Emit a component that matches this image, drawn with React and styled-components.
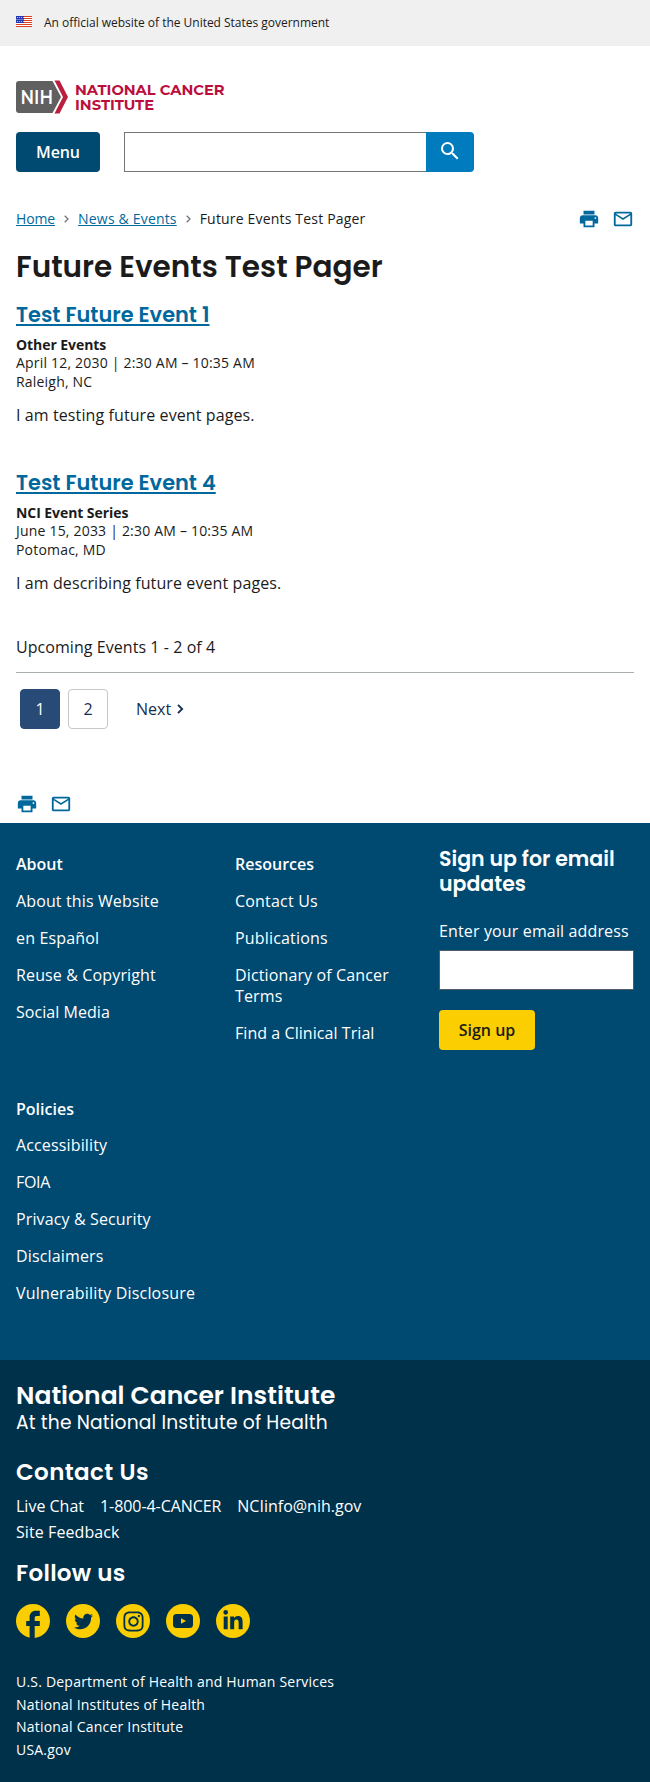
import React from "react";
import styled, { createGlobalStyle } from "styled-components";
import { MdPrint, MdMailOutline, MdSearch } from "react-icons/md";
import { FaTwitter, FaInstagram, FaLinkedinIn } from "react-icons/fa";

const Global = createGlobalStyle`
  * { box-sizing: border-box; }
  body { margin: 0; background: #fff; color: #1b1b1b; font-family: "Open Sans", sans-serif; font-size: 16px; line-height: 21px; }
  a { color: inherit; text-decoration: none; }
  h1, h2, h3, p, ul { margin: 0; padding: 0; }
  ul { list-style: none; }
`;
const display = `font-family: Poppins, Inter, sans-serif; font-weight: 600; white-space: nowrap;`;

const Banner = styled.div`
  height: 46px; padding: 0 16px 1px; background: #f0f0f0; display: flex; align-items: center; gap: 12px;
  font-size: 12px; letter-spacing: -0.02px;
  svg { margin-top: -2px; }
`;
const Header = styled.header`
  padding: 34px 16px 0;
  > svg { display: block; }
`;
const Controls = styled.div` display: flex; margin-top: 18px; gap: 24px; `;
const Button = styled.button`
  height: 40px; width: ${(p) => p.$w}px; padding: 0; border: 0; border-radius: 4px;
  background: ${(p) => p.$bg}; color: ${(p) => p.$fg}; font: 600 16px "Open Sans", sans-serif; letter-spacing: -0.1px;
`;
const Search = styled.div` display: flex; width: 350px; height: 40px; `;
const Input = styled.input`
  height: 40px; width: 100%; min-width: 0; flex: 1; border: 1px solid ${(p) => p.$edge || "#71767a"}; border-radius: 0; background: #fff; display: block;
  ${(p) => p.$open && "border-right: 0;"}
`;
const SearchButton = styled.button`
  width: 48px; height: 40px; border: 0; padding: 0 0 3px; border-radius: 0 4px 4px 0; background: #007bbd; color: #fff;
  display: flex; align-items: center; justify-content: center;
`;
const Main = styled.main` padding: 37px 16px 0; height: 651px; `;
const TopRow = styled.div` display: flex; justify-content: space-between; height: 20px; align-items: center; `;
const Crumbs = styled.nav`
  display: flex; align-items: center; font-size: 14px; line-height: 20px;
  svg { margin: 0 9px; color: #71767a; }
`;
const Crumb = styled.a`
  letter-spacing: ${(p) => p.$ls}px;
  ${(p) => p.href && "color: #00689d; text-decoration: underline;"}
`;
const Tools = styled.div` display: flex; gap: 12px; color: #00689d; margin-top: ${(p) => p.$mt || 0}px; svg { display: block; } `;
const Title = styled.h1`${display} font-size: 29.5px; line-height: 38px; margin: 19px 0 15px; `;
const EventBlock = styled.article` height: 168px; &:last-child { height: 167.5px; } `;
const EventTitle = styled.h2`
  ${display} font-size: 20.9px; line-height: 28px; color: #00689d;
  a { text-decoration: underline; text-decoration-thickness: 2px; text-underline-offset: 2px; }
`;
const Meta = styled.div`
  font-size: 14px; line-height: 18.6px; margin-top: 6.7px; letter-spacing: 0.2px;
  b { letter-spacing: -0.07px; }
`;
const Desc = styled.p` margin-top: 13.9px; letter-spacing: 0.1px; `;
const Count = styled.p` border-bottom: 1px solid #a9aeb1; height: 36px; letter-spacing: 0.06px; `;
const Pager = styled.nav` display: flex; padding: 16px 4px 0; gap: 8px; align-items: center; color: #1b1b1b; `;
const Page = styled.a`
  width: 40px; height: 40px; border-radius: 4px; display: flex; align-items: center; justify-content: center; padding-top: 1px;
  border: 1px solid ${(p) => (p.$on ? "#284a76" : "#c9c9c9")}; background: ${(p) => (p.$on ? "#284a76" : "#fff")};
  color: ${(p) => (p.$on ? "#fff" : "#162e51")};
`;
const Next = styled.a` display: flex; align-items: center; margin-left: 20px; gap: 6px; color: #162e51; padding-top: 1px; `;

const Footer = styled.footer` color: #fff; `;
const Primary = styled.div` height: 537px; background: #004971; display: flex; padding: 0 16px; `;
const Columns = styled.div` display: grid; grid-template-columns: 219px 160px; grid-template-rows: 245px auto; padding-top: 31px; width: 423px; align-content: start; `;
const Column = styled.section`
  h3 { font-size: 16px; line-height: 21px; font-weight: 600; }
  &:nth-child(3) li:first-child { margin-top: 15px; }
`;
const LinkItem = styled.li` margin-top: 16px; letter-spacing: ${(p) => p.$ls}px; `;
const SignUp = styled.section`
  flex: 1; padding-top: 23px;
  h3 { ${display} font-size: 20.5px; line-height: 25px; }
  label { display: block; margin: 25px 0 8px; white-space: nowrap; letter-spacing: 0.14px; }
  button { margin-top: 20px; letter-spacing: 0; }
`;
const Secondary = styled.div` height: 422px; background: #00314b; padding: 20px 16px 0; `;
const Brand = styled.h2`${display} font-size: 25px; line-height: 32px; letter-spacing: 0.03px; `;
const Sub = styled.p`${display} font-weight: 400; font-size: 18.7px; line-height: 24px; margin-top: -1px; letter-spacing: 0.15px; `;
const Heading = styled.h3`${display} font-size: 23px; line-height: 32px; margin-top: ${(p) => p.$mt}px; letter-spacing: ${(p) => p.$ls}px; `;
const Links = styled.div` display: flex; flex-wrap: wrap; column-gap: 16px; width: 380px; line-height: 26px; margin-top: 5px; `;
const ContactLink = styled.a` letter-spacing: ${(p) => p.$ls || 0}px; `;
const Socials = styled.div` display: flex; gap: 16px; margin-top: 15px; `;
const Disc = styled.a`
  width: 34px; height: 34px; border-radius: 50%; background: ${(p) => (p.$bare ? "none" : "#face00")}; color: #00314b;
  display: flex; align-items: center; justify-content: center;
`;
const Agencies = styled.ul` font-size: 14px; line-height: 22.9px; margin-top: 32.6px; letter-spacing: 0.21px; `;

const Flag = () => (
  <svg width="16" height="11" viewBox="0 0 16 11">
    <rect width="16" height="11" fill="#fff" />
    {[0, 2, 4, 6, 8, 10].map((y) => <rect key={y} y={y} width="16" height="1" fill="#db3e1f" />)}
    <rect width="8" height="7" fill="#1e33b1" />
    {[1, 3, 5].map((y) => [1, 3, 5, 7].map((x) => <circle key={x + "-" + y} cx={x - (y === 3 ? 0 : -0.3)} cy={y + 0.5} r="0.5" fill="#fff" />))}
  </svg>
);
const Logo = () => (
  <svg width="210" height="34" viewBox="0 0 210 34" fontFamily="Montserrat, Inter, sans-serif">
    <path d="M3 1H36.5L45 17L36.5 33H3Q0 33 0 30V4Q0 1 3 1Z" fill="#606060" />
    <path d="M38.5 0.5H43.5L52 17L43.5 33.5H38.5L47 17Z" fill="#bb1f3f" />
    <text x="4.5" y="24" fontSize="20" fontWeight="600" fill="#fff" textLength="32.5" lengthAdjust="spacingAndGlyphs">NIH</text>
    <g fill="#bb0e3d" fontSize="14.8" fontWeight="700">
      <text x="59" y="14.5" textLength="149.5" lengthAdjust="spacingAndGlyphs">NATIONAL CANCER</text>
      <text x="59" y="30" textLength="79" lengthAdjust="spacingAndGlyphs">INSTITUTE</text>
    </g>
  </svg>
);
const Chevron = ({ w, h, stroke }) => (
  <svg width={w} height={h} viewBox="0 0 5 8" fill="none" stroke="currentColor" strokeWidth={stroke}>
    <path d="M0.7 0.7L4 4L0.7 7.3" />
  </svg>
);
const FacebookDisc = () => (
  <svg width="34" height="34" viewBox="2 2 20 20">
    <path fill="#face00" d="M22 12c0-5.52-4.48-10-10-10S2 6.48 2 12c0 4.84 3.44 8.87 8 9.8V15H8v-3h2V9.5C10 7.57 11.57 6 13.5 6H16v3h-2c-.55 0-1 .45-1 1v2h3v3h-3v6.95c5.05-.5 9-4.76 9-9.95z" />
  </svg>
);
const YoutubeGlyph = () => (
  <svg width="20" height="14" viewBox="0 0 20 14">
    <rect width="20" height="14" rx="3.5" fill="#00314b" />
    <path d="M8 4.3L13 7L8 9.7Z" fill="#face00" />
  </svg>
);
const PageTools = ({ mt }) => (
  <Tools $mt={mt}><MdPrint size={22} /><MdMailOutline size={22} /></Tools>
);
const Event = ({ title, kind, when, where, text }) => (
  <EventBlock>
    <EventTitle><a href="#">{title}</a></EventTitle>
    <Meta><b>{kind}</b><div>{when}</div><div>{where}</div></Meta>
    <Desc>{text}</Desc>
  </EventBlock>
);
const LinkColumn = ({ title, items }) => (
  <Column>
    <h3>{title}</h3>
    <ul>{items.map(([label, ls = 0.13]) => <LinkItem key={label} $ls={ls}><a href="#">{label}</a></LinkItem>)}</ul>
  </Column>
);

export default function App() {
  return (
    <>
      <Global />
      <Banner><Flag /><span>An official website of the United States government</span></Banner>
      <Header>
        <Logo />
        <Controls>
          <Button $w={84} $bg="#004971" $fg="#fff">Menu</Button>
          <Search><Input $open aria-label="Search" /><SearchButton aria-label="Submit"><MdSearch size={24} /></SearchButton></Search>
        </Controls>
      </Header>
      <Main>
        <TopRow>
          <Crumbs>
            <Crumb href="#" $ls={-0.12}>Home</Crumb>
            <Chevron w={5} h={8} stroke={1.3} />
            <Crumb href="#" $ls={0.18}>News &amp; Events</Crumb>
            <Chevron w={5} h={8} stroke={1.3} />
            <Crumb as="span" $ls={0.18}>Future Events Test Pager</Crumb>
          </Crumbs>
          <PageTools />
        </TopRow>
        <Title>Future Events Test Pager</Title>
        <section>
          <Event title="Test Future Event 1" kind="Other Events" when="April 12, 2030 | 2:30 AM – 10:35 AM" where="Raleigh, NC" text="I am testing future event pages." />
          <Event title="Test Future Event 4" kind="NCI Event Series" when="June 15, 2033 | 2:30 AM – 10:35 AM" where="Potomac, MD" text="I am describing future event pages." />
        </section>
        <Count>Upcoming Events 1 - 2 of 4</Count>
        <Pager><Page $on>1</Page><Page>2</Page><Next>Next<Chevron w={6.5} h={10} stroke={1.5} /></Next></Pager>
        <PageTools mt={64} />
      </Main>
      <Footer>
        <Primary>
          <Columns>
            <LinkColumn title="About" items={[["About this Website"], ["en Español", 0.15], ["Reuse & Copyright", 0.14], ["Social Media", 0.05]]} />
            <LinkColumn title="Resources" items={[["Contact Us", 0.2], ["Publications", 0.18], ["Dictionary of Cancer Terms", 0.13], ["Find a Clinical Trial", 0.06]]} />
            <LinkColumn title="Policies" items={[["Accessibility", 0.14], ["FOIA", -0.3], ["Privacy & Security"], ["Disclaimers", 0.15], ["Vulnerability Disclosure", 0.17]]} />
          </Columns>
          <SignUp>
            <h3>Sign up for email<br />updates</h3>
            <label htmlFor="email">Enter your email address</label>
            <Input id="email" $edge="#565c65" />
            <Button $w={96} $bg="#face00" $fg="#1b1b1b">Sign up</Button>
          </SignUp>
        </Primary>
        <Secondary>
          <Brand>National Cancer Institute</Brand>
          <Sub>At the National Institute of Health</Sub>
          <Heading $mt={21} $ls={0.4}>Contact Us</Heading>
          <Links>
            <ContactLink>Live Chat</ContactLink>
            <ContactLink $ls={-0.07}>1-800-4-CANCER</ContactLink>
            <ContactLink>NCIinfo@nih.gov</ContactLink>
            <ContactLink $ls={0.08}>Site Feedback</ContactLink>
          </Links>
          <Heading $mt={12} $ls={0.3}>Follow us</Heading>
          <Socials>
            <Disc $bare><FacebookDisc /></Disc>
            <Disc><FaTwitter size={19} /></Disc>
            <Disc><FaInstagram size={23} /></Disc>
            <Disc><YoutubeGlyph /></Disc>
            <Disc><FaLinkedinIn size={22} /></Disc>
          </Socials>
          <Agencies><li>U.S. Department of Health and Human Services</li><li>National Institutes of Health</li><li>National Cancer Institute</li><li>USA.gov</li></Agencies>
        </Secondary>
      </Footer>
    </>
  );
}
